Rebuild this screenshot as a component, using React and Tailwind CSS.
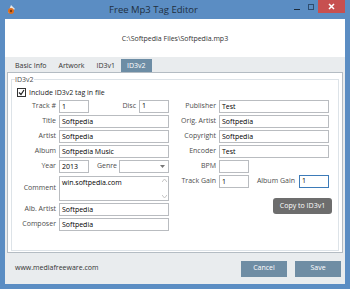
import React from "react";

const font = { fontFamily: '"Open Sans", "Noto Sans", sans-serif' };

function Field({ label, labelW, value, w = "w-[110px]", focused }) {
  return (
    <div className="flex items-center h-[13px]">
      <span className={`${labelW} text-right pr-[3px] text-[#4d4d4d] whitespace-nowrap`}>{label}</span>
      <div
        className={`${w} h-[13px] border ${focused ? "border-[#3d7bb8]" : "border-[#b9bcc0]"} bg-white flex items-center pl-[2px] text-black leading-none`}
      >
        {value}
      </div>
    </div>
  );
}

function Tab({ label, active }) {
  return (
    <div
      className={`h-[13px] px-[6px] flex items-center leading-none ${
        active ? "bg-[#6d8da5] text-white" : "text-[#333]"
      }`}
    >
      {label}
    </div>
  );
}

export default function App() {
  return (
    <div
      className="w-[350px] h-[289px] bg-[#5b8dc3] flex flex-col text-[7px] overflow-hidden"
      style={font}
    >
      {/* title bar */}
      <div className="h-[19px] flex items-center relative shrink-0">
        <svg width="11" height="11" viewBox="0 0 11 11" className="ml-[6px]">
          <path d="M2 9 L5 1 L9 5 Z" fill="#e8e8e8" />
          <circle cx="5" cy="7" r="3" fill="#e0701f" />
          <circle cx="5" cy="7" r="1.2" fill="#7a3a10" />
        </svg>
        <div className="flex-1 text-center text-[9.5px] text-[#1f2f40] leading-none">Free Mp3 Tag Editor</div>
        <div className="flex items-start h-full">
          <div className="w-[14px] h-[13px] flex items-center justify-center">
            <div className="w-[6px] h-[1px] bg-[#1d2b3a] mt-[6px]" />
          </div>
          <div className="w-[14px] h-[13px] flex items-center justify-center">
            <div className="w-[6px] h-[6px] border border-[#2e4d70]" />
          </div>
          <div className="w-[27px] h-[13px] bg-[#c75050] flex items-center justify-center mr-[5px]">
            <svg width="7" height="7" viewBox="0 0 7 7">
              <path d="M1 1 L6 6 M6 1 L1 6" stroke="#fff" strokeWidth="1.5" />
            </svg>
          </div>
        </div>
      </div>

      {/* window body */}
      <div className="flex-1 mx-[5px] mb-[5px] flex flex-col bg-[#e9ecee]">
        <div className="h-[38px] bg-white flex items-center justify-center text-[#333] leading-none">
          C:\Softpedia Files\Softpedia.mp3
        </div>

        <div className="flex items-end h-[15px] pl-[4px]">
          <Tab label="Basic Info" />
          <Tab label="Artwork" />
          <Tab label="ID3v1" />
          <Tab label="ID3v2" active />
        </div>

        <div className="mx-[2px] h-[181px] border border-[#b4bcc3] bg-white px-[3px] pt-[3px] pb-[1px] flex flex-col">
          <fieldset className="flex-1 border border-[#dde3e8] px-[4px] min-w-0">
            <legend className="text-[#4d4d4d] px-[0px] leading-none -ml-[1px]">ID3v2</legend>

            <div className="flex items-center mt-[4px] ml-[1px] h-[10px]">
              <div className="w-[9px] h-[9px] border border-[#333] flex items-center justify-center bg-white">
                <svg width="7" height="7" viewBox="0 0 7 7">
                  <path d="M1 3.5 L3 5.5 L6 1" stroke="#222" strokeWidth="1.2" fill="none" />
                </svg>
              </div>
              <span className="ml-[3px] text-[#222] leading-none">Include ID3v2 tag in file</span>
            </div>

            <div className="flex mt-[3px] -ml-[4px]">
              {/* left column */}
              <div className="flex flex-col gap-[2px] w-[157px]">
                <div className="flex items-center">
                  <Field label="Track #" labelW="w-[47px]" value="1" w="w-[30px]" />
                  <span className="w-[50px] text-right pr-[3px] text-[#4d4d4d]">Disc</span>
                  <div className="w-[30px] h-[13px] border border-[#b9bcc0] flex items-center pl-[2px] text-black">1</div>
                </div>
                <Field label="Title" labelW="w-[47px]" value="Softpedia" />
                <Field label="Artist" labelW="w-[47px]" value="Softpedia" />
                <Field label="Album" labelW="w-[47px]" value="Softpedia Music" />
                <div className="flex items-center">
                  <Field label="Year" labelW="w-[47px]" value="2013" w="w-[30px]" />
                  <span className="w-[30px] text-right pr-[2px] text-[#4d4d4d]">Genre</span>
                  <div className="w-[50px] h-[13px] border border-[#b9bcc0] flex items-center justify-end pr-[3px]">
                    <svg width="5" height="3" viewBox="0 0 5 3">
                      <path d="M0 0 L5 0 L2.5 3 Z" fill="#777" />
                    </svg>
                  </div>
                </div>
                <div className="flex items-center mt-[1px]">
                  <span className="w-[47px] text-right pr-[3px] text-[#4d4d4d]">Comment</span>
                  <div className="w-[110px] h-[25px] border border-[#b9bcc0] flex">
                    <div className="flex-1 pl-[2px] pt-[1px] text-black leading-[9px]">win.softpedia.com</div>
                    <div className="w-[8px] flex flex-col justify-between items-center py-[2px]">
                      <svg width="5" height="3" viewBox="0 0 5 3"><path d="M0 3 L2.5 0 L5 3" stroke="#c4c4c4" fill="none" /></svg>
                      <svg width="5" height="3" viewBox="0 0 5 3"><path d="M0 0 L2.5 3 L5 0" stroke="#c4c4c4" fill="none" /></svg>
                    </div>
                  </div>
                </div>
                <Field label="Alb. Artist" labelW="w-[47px]" value="Softpedia" />
                <Field label="Composer" labelW="w-[47px]" value="Softpedia" />
              </div>

              {/* right column */}
              <div className="flex flex-col gap-[2px] w-[162px]">
                <Field label="Publisher" labelW="w-[50px]" value="Test" />
                <Field label="Orig. Artist" labelW="w-[50px]" value="Softpedia" />
                <Field label="Copyright" labelW="w-[50px]" value="Softpedia" />
                <Field label="Encoder" labelW="w-[50px]" value="Test" />
                <Field label="BPM" labelW="w-[50px]" value="" w="w-[30px]" />
                <div className="flex items-center">
                  <Field label="Track Gain" labelW="w-[50px]" value="1" w="w-[30px]" />
                  <span className="w-[50px] text-right pr-[4px] text-[#4d4d4d]">Album Gain</span>
                  <div className="w-[30px] h-[13px] border border-[#3d7bb8] flex items-center pl-[2px] text-black">1</div>
                </div>
                <div className="flex justify-end mt-[8px] -mr-[1px]">
                  <div className="w-[59px] h-[16px] rounded-[3px] bg-[#6d6d6d] text-white flex items-center justify-center">
                    Copy to ID3v1
                  </div>
                </div>
              </div>
            </div>
          </fieldset>
        </div>

        <div className="flex-1 flex items-center pl-[10px] pr-[4px]">
          <span className="flex-1 text-[#333]">www.mediafreeware.com</span>
          <div className="w-[46px] h-[16px] bg-[#6f8da4] text-white flex items-center justify-center">Cancel</div>
          <div className="w-[46px] h-[16px] bg-[#6f8da4] text-white flex items-center justify-center ml-[8px]">Save</div>
        </div>
      </div>
    </div>
  );
}
